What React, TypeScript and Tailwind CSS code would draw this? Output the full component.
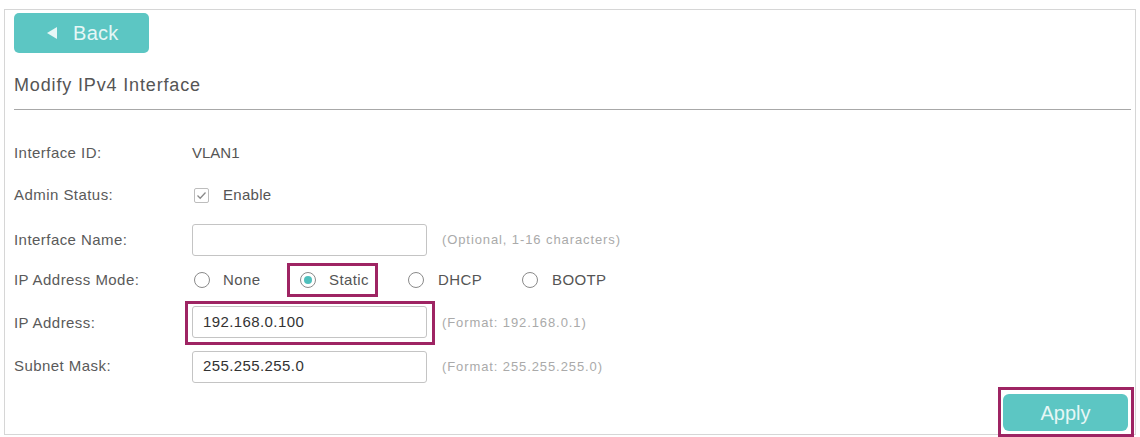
import React from "react";

const F = { fontFamily: '"Liberation Sans", Arial, sans-serif' };

function Radio({ checked }: { checked?: boolean }) {
  return (
    <span className="flex h-[16px] w-[16px] shrink-0 items-center justify-center rounded-full border border-[#8a8a8a] bg-white">
      {checked && <span className="h-[8px] w-[8px] rounded-full bg-[#4fbfbc]" />}
    </span>
  );
}

function Label({ children }: { children: React.ReactNode }) {
  return <div className="w-[178px] shrink-0 text-[15px] text-[#5a5a5a] tracking-[0.45px]">{children}</div>;
}

function Hint({ children, ml }: { children: React.ReactNode; ml: string }) {
  return <div className={`${ml} text-[13px] text-[#aaa] tracking-[0.9px]`}>{children}</div>;
}

function Input({ value }: { value?: string }) {
  return (
    <div className="flex h-[32px] w-[235px] items-center rounded-[3px] border border-[#c4c4c4] bg-white pl-[10px] text-[15px] text-[#333] tracking-[0.4px]">
      {value}
    </div>
  );
}

export default function App() {
  return (
    <div className="relative h-[437px] w-[1140px] overflow-hidden bg-white" style={F}>
      <div className="ml-[4px] mt-[9px] h-[426px] w-[1132px] border border-[#d6d6d6]">
        <div className="ml-[9px] mt-[3px] flex h-[40px] w-[135px] items-center rounded-[5px] bg-[#5cc6c3] pl-[33px] text-[20px] text-[#e6f7f6]">
          <svg width="10" height="12" viewBox="0 0 10 12" className="mr-[16px]">
            <polygon points="10,0 10,12 0,6" fill="#e6f7f6" />
          </svg>
          <span className="tracking-[0.3px]">Back</span>
        </div>
        <div className="ml-[9px] flex h-[56px] items-center pt-[9px] text-[18px] text-[#555] tracking-[0.85px]">
          Modify IPv4 Interface
        </div>
        <div className="ml-[9px] h-px w-[1117px] bg-[#a8a8a8]" />

        <div className="ml-[9px]">
          <div className="mt-[22px] flex h-[42px] items-center">
            <Label>Interface ID:</Label>
            <div className="text-[15px] text-[#555]">VLAN1</div>
          </div>
          <div className="flex h-[42px] items-center">
            <Label>Admin Status:</Label>
            <span className="ml-[2px] flex h-[15px] w-[15px] items-center justify-center rounded-[2px] border border-[#bdbdbd]">
              <svg width="11" height="9" viewBox="0 0 11 9">
                <polyline points="1.5,4.5 4.2,7.2 9.5,1.5" fill="none" stroke="#8a8a8a" strokeWidth="1.3" />
              </svg>
            </span>
            <span className="ml-[14px] text-[15px] text-[#555] tracking-[0.3px]">Enable</span>
          </div>
          <div className="flex h-[48px] items-center">
            <Label>Interface Name:</Label>
            <Input />
            <Hint ml="ml-[15px]">(Optional, 1-16 characters)</Hint>
          </div>
          <div className="flex h-[32px] items-center text-[15px] text-[#555] tracking-[0.4px]">
            <Label>IP Address Mode:</Label>
            <div className="flex w-[95px] items-center">
              <span className="ml-[2px]"><Radio /></span>
              <span className="ml-[13px]">None</span>
            </div>
            <div className="flex h-[34px] w-[91px] items-center border-[3px] border-[#9e2463] pl-[10px]">
              <Radio checked />
              <span className="ml-[13px]">Static</span>
            </div>
            <div className="ml-[30px] flex w-[114px] items-center">
              <Radio />
              <span className="ml-[14px]">DHCP</span>
            </div>
            <div className="flex items-center">
              <Radio />
              <span className="ml-[14px]">BOOTP</span>
            </div>
          </div>
          <div className="flex h-[54px] items-center">
            <Label>IP Address:</Label>
            <div className="-ml-[7px] h-[44px] w-[250px] border-[3px] border-[#9e2463] pl-[4px] pt-[2px]">
              <Input value="192.168.0.100" />
            </div>
            <Hint ml="ml-[7px]">(Format: 192.168.0.1)</Hint>
          </div>
          <div className="flex h-[33px] items-center">
            <Label>Subnet Mask:</Label>
            <Input value="255.255.255.0" />
            <Hint ml="ml-[15px]">(Format: 255.255.255.0)</Hint>
          </div>
        </div>

        <div className="mt-[4px] flex justify-end pr-[1px]">
          <div className="h-[50px] w-[136px] border-[3px] border-[#9e2463] bg-white pl-[2px] pt-[4px]">
            <div className="flex h-[37px] w-[125px] items-center justify-center rounded-[6px] bg-[#5cc6c3] text-[20px] text-[#e6f7f6]">
              Apply
            </div>
          </div>
        </div>
      </div>
    </div>
  );
}
